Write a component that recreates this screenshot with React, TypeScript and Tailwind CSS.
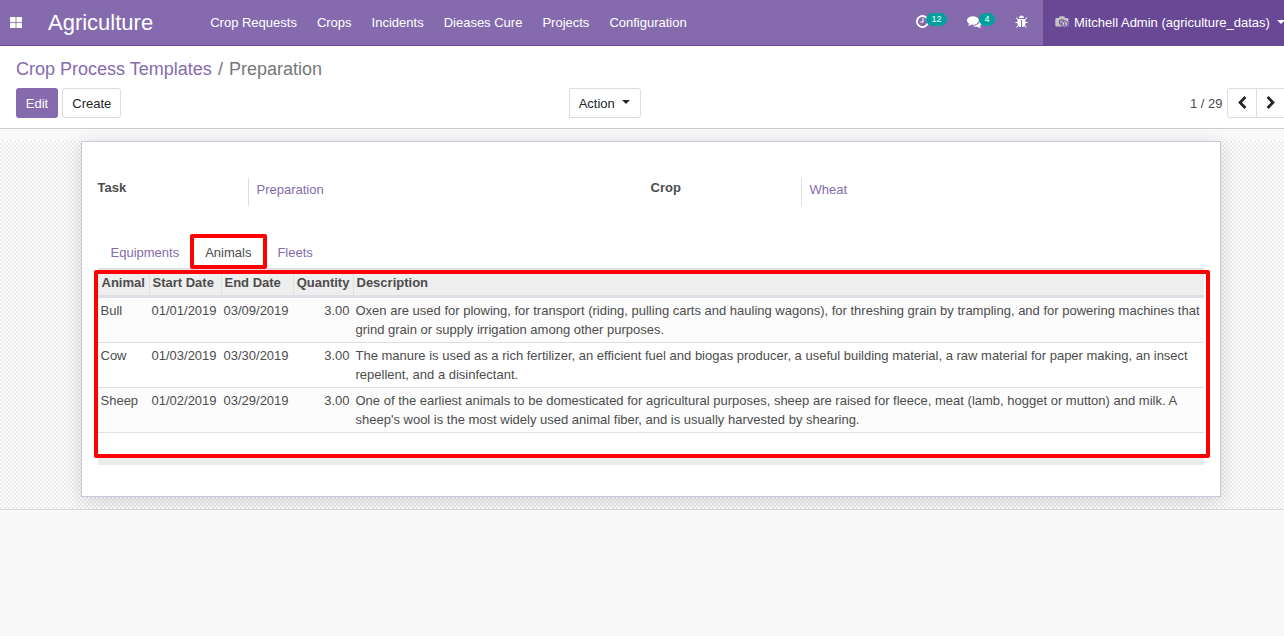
import React from "react";

const menu = ["Crop Requests", "Crops", "Incidents", "Dieases Cure", "Projects", "Configuration"];

const rows = [
  {
    animal: "Bull",
    start: "01/01/2019",
    end: "03/09/2019",
    qty: "3.00",
    text: "Oxen are used for plowing, for transport (riding, pulling carts and hauling wagons), for threshing grain by trampling, and for powering machines that grind grain or supply irrigation among other purposes.",
  },
  {
    animal: "Cow",
    start: "01/03/2019",
    end: "03/30/2019",
    qty: "3.00",
    text: "The manure is used as a rich fertilizer, an efficient fuel and biogas producer, a useful building material, a raw material for paper making, an insect repellent, and a disinfectant.",
  },
  {
    animal: "Sheep",
    start: "01/02/2019",
    end: "03/29/2019",
    qty: "3.00",
    text: "One of the earliest animals to be domesticated for agricultural purposes, sheep are raised for fleece, meat (lamb, hogget or mutton) and milk. A sheep's wool is the most widely used animal fiber, and is usually harvested by shearing.",
  },
];

const CLOCK =
  "M1024 544v448q0 14-9 23t-23 9h-320q-14 0-23-9t-9-23v-64q0-14 9-23t23-9h224v-352q0-14 9-23t23-9h64q14 0 23 9t9 23zm416 352q0-148-73-273t-198-198-273-73-273 73-198 198-73 273 73 273 198 198 273 73 273-73 198-198 73-273zm224 0q0 209-103 385.500t-279.500 279.500-385.500 103-385.500-103-279.500-279.500-103-385.500 103-385.500 279.500-279.500 385.500-103 385.500 103 279.500 279.500 103 385.500z";
const COMMENTS =
  "M1408 768q0 139-94 257t-256.500 186.500-353.500 68.500q-86 0-176-16-124 88-278 128-36 9-86 16h-3q-11 0-20.500-8t-11.500-21q-1-3-1-6.500t.5-6.500 2-6l2.500-5t3.500-5.500 4-5 4.500-5 4-4.500q5-6 23-25t26-29.500 22.500-29 25-38.500 20.500-44q-124-72-195-177t-71-224q0-139 94-257t256.500-186.500 353.500-68.500 353.500 68.500 256.500 186.500 94 257zm384 256q0 120-71 224.500t-195 176.500q10 24 20.500 44t25 38.500 22.500 29 26 29.500 23 25q1 1 4 4.500t4.500 5 4 5 3.500 5.500l2.500 5t2 6 .5 6.500-1 6.500q-3 14-13 22t-22 7q-50-7-86-16-154-40-278-128-90 16-176 16-271 0-472-132 58 4 88 4 161 0 309-45t264-129q125-92 192-212t67-254q0-77-23-152 129 71 204 178t75 230z";
const BUG =
  "M1632 960q0 26-19 45t-45 19h-224q0 171-67 290l208 209q19 19 19 45t-19 45q-18 19-45 19t-45-19l-198-197q-5 5-15 13t-42 28.500-65 36.500-82 29-97 13v-896h-128v896q-51 0-101.500-13.500t-87-33-66-39-43.500-32.500l-15-14-183 207q-20 21-48 21-24 0-43-16-19-18-20.500-44.500t15.500-46.500l202-227q-58-114-58-274h-224q-26 0-45-19t-19-45 19-45 45-19h224v-294l-173-173q-19-19-19-45t19-45 45-19 45 19l173 173h844l173-173q19-19 45-19t45 19 19 45-19 45l-173 173v294h224q26 0 45 19t19 45zm-480-576h-640q0-133 93.500-226.500t226.500-93.500 226.500 93.500 93.500 226.500z";
const LEFT =
  "M1427 301l-531 531 531 531q19 19 19 45t-19 45l-166 166q-19 19-45 19t-45-19l-742-742q-19-19-19-45t19-45l742-742q19-19 45-19t45 19l166 166q19 19 19 45t-19 45z";
const RIGHT =
  "M1363 877l-742 742q-19 19-45 19t-45-19l-166-166q-19-19-19-45t19-45l531-531-531-531q-19-19-19-45t19-45l166-166q19-19 45-19t45 19l742 742q19 19 19 45t-19 45z";

function Icon({ d, className }: { d: string; className: string }) {
  return (
    <svg viewBox="0 0 1792 1792" fill="currentColor" className={className}>
      <path d={d} />
    </svg>
  );
}

function Avatar() {
  return (
    <svg viewBox="0 0 14 12" className="mb-px h-3 w-3.5 shrink-0">
      <path d="M1.500 2h2.300l.9-1.700h4.500l.9 1.700h2.200q1.200 0 1.200 1.200v6.100q0 1.200-1.200 1.200h-10.800q-1.200 0-1.200-1.200v-6.100q0-1.200 1.200-1.200z" fill="#c5c2c5" />
      <circle cx="6.800" cy="6" r="2.300" fill="none" stroke="#694896" strokeWidth="1.100" />
      <circle cx="9.700" cy="8" r="3.200" fill="#c5c2c5" stroke="#694896" strokeWidth="0.900" />
      <path d="M9.700 6v4M8.400 8.700l1.300 1.400 1.300-1.400" fill="none" stroke="#694896" strokeWidth="0.800" />
    </svg>
  );
}

function Badge({ className, children }: { className: string; children: React.ReactNode }) {
  return (
    <span className={"absolute top-[13px] h-[13px] rounded-full bg-[#00a09d] text-[9px] leading-[13px] " + className}>
      {children}
    </span>
  );
}

function Navbar() {
  return (
    <header className="flex h-[46px] shrink-0 border-b border-[#694896] bg-[#856bae] text-white">
      <div className="flex h-[45px] w-12 items-center pl-[10px]">
        <svg viewBox="0 0 12 11" fill="currentColor" className="mb-px h-[11px] w-[12px]">
          <rect x="0" y="0" width="5.600" height="5.200" rx="0.600" />
          <rect x="6.400" y="0" width="5.600" height="5.200" rx="0.600" />
          <rect x="0" y="5.900" width="5.600" height="5.100" rx="0.600" />
          <rect x="6.400" y="5.900" width="5.600" height="5.100" rx="0.600" />
        </svg>
      </div>
      <div className="w-[152.2px] text-[22px] leading-[45px]">Agriculture</div>
      <nav className="flex leading-[45px]">
        {menu.map((m) => (
          <a key={m} className="px-[10px]">{m}</a>
        ))}
      </nav>
      <div className="ml-auto flex h-[45px]">
        <div className="relative w-[52px] pt-[14px]">
          <Icon d={CLOCK} className="h-[15px] w-[15px]" />
          <Badge className="left-[11px] px-[5.5px]">12</Badge>
        </div>
        <div className="relative w-12 pt-[14px]">
          <Icon d={COMMENTS} className="h-[15px] w-[15px]" />
          <Badge className="left-[12px] px-[5.5px]">4</Badge>
        </div>
        <div className="w-[28px] pt-[15px]">
          <Icon d={BUG} className="h-[14px] w-[14px]" />
        </div>
        <div className="flex h-[46px] w-[241px] items-center overflow-hidden bg-[#694896] pb-px pl-[11.5px] whitespace-nowrap">
          <Avatar />
          <span className="ml-[5.5px]">Mitchell Admin (agriculture_datas)</span>
          <span className="mb-px ml-[7px] shrink-0 border-x-4 border-t-4 border-x-transparent border-t-white" />
        </div>
      </div>
    </header>
  );
}

function ControlPanel() {
  return (
    <section className="flex h-[83px] shrink-0 flex-col border-b border-[#cccccc] bg-white pl-4">
      <div className="flex h-[42px] items-center pt-1 text-lg text-[#777777]">
        <span className="text-[#856bae]">Crop Process Templates</span>
        <span className="pr-[6px] pl-[6.3px]">/</span>
        <span>Preparation</span>
      </div>
      <div className="flex h-[30px] text-[#212529]">
        <button className="w-[42px] rounded-[3px] bg-[#856bae] pt-px text-white">Edit</button>
        <button className="ml-1 w-[59px] rounded-[3px] border border-[#dcdce6] pt-px pl-[0.7px]">Create</button>
        <button className="ml-[448px] flex w-[72px] items-center rounded-r-[3px] border border-[#dcdce6] pt-px pl-[8.7px]">
          Action
          <span className="mb-1 ml-[7px] border-x-4 border-t-4 border-x-transparent border-t-[#212529]" />
        </button>
        <span className="ml-auto pr-[4.5px] leading-[31px] text-[#4c4c4c]">1 / 29</span>
        <button className="flex w-[30px] items-center justify-center rounded-l-[3px] border border-[#dcdce6]">
          <Icon d={LEFT} className="h-[14px] w-[14px]" />
        </button>
        <button className="flex w-[27px] items-center justify-center border-y border-[#dcdce6]">
          <Icon d={RIGHT} className="h-[14px] w-[14px]" />
        </button>
      </div>
    </section>
  );
}

function Field({ label, value }: { label: string; value: string }) {
  return (
    <div className="flex h-7 w-[553px]">
      <span className="w-[150.5px] font-bold leading-5">{label}</span>
      <span className="border-l border-[#dddddd] pl-[7.5px] leading-6 text-[#856bae]">{value}</span>
    </div>
  );
}

const GRID = "grid grid-cols-[51px_72px_72px_60px_851px]";

function AnimalTable() {
  return (
    <div className="border-t-2 border-[#dcdfe6]">
      <div className={GRID + " h-[28px] border-b-3 border-[#dcdfe6] bg-[#eeeeee] pt-1 font-bold leading-[18px]"}>
        <span className="pl-[3.5px]">Animal</span>
        <span className="-mt-1 border-l border-[#dfdfdf] pt-1 pl-[2.5px]">Start Date</span>
        <span className="-mt-1 border-l border-[#dfdfdf] pt-1 pl-[2.5px]">End Date</span>
        <span className="-mt-1 border-l border-[#dfdfdf] pt-1 pl-[2.7px]">Quantity</span>
        <span className="-mt-1 border-l border-[#dfdfdf] pt-1 pl-[2.5px]">Description</span>
      </div>
      {rows.map((r) => (
        <div key={r.animal} className={GRID + " h-[45px] border-b border-[#dcdfe6] pt-[3px] leading-[19px] odd:bg-white even:bg-[#fcfcfc]"}>
          <span className="pl-[2.5px]">{r.animal}</span>
          <span className="pl-[2.5px]">{r.start}</span>
          <span className="pl-[2.5px]">{r.end}</span>
          <span className="pr-[3.5px] text-right">{r.qty}</span>
          <span className="pr-[3px] pl-[2.5px]">{r.text}</span>
        </div>
      ))}
      <div className="h-6" />
      <div className="h-2 bg-[#ececec]" />
    </div>
  );
}

export default function App() {
  return (
    <div className="flex h-[636px] w-[1284px] flex-col overflow-hidden bg-[#f9f9f9] font-['Liberation_Sans',Arial,sans-serif] text-[13px] leading-[19.5px] text-[#4c4c4c]">
      <Navbar />
      <ControlPanel />
      <main className="mt-3 h-[369px] border-b border-[#dddddd] bg-[conic-gradient(#ebebeb_25%,#ffffff_0_50%,#ebebeb_0_75%,#ffffff_0)] bg-size-[4px_4px] pl-[81px] [clip-path:inset(-12px_0_0_0)]">
        <div className="relative h-[356px] w-[1140px] border border-[#c8c8d8] bg-white px-4 shadow-[0_4px_18px_rgba(0,0,0,0.15)]">
          <div className="-ml-[0.5px] flex pt-9">
            <Field label="Task" value="Preparation" />
            <Field label="Crop" value="Wheat" />
          </div>
          <div className="flex h-[62px] gap-[26px] pt-[37px] pl-[12.5px] text-[#856bae]">
            <span>Equipments</span>
            <span className="text-[#4c4c4c]">Animals</span>
            <span>Fleets</span>
          </div>
          <AnimalTable />
          <div className="absolute top-[92px] left-[108px] h-[35px] w-[77px] rounded-[2px] border-4 border-[#ff0000]" />
          <div className="absolute top-[128px] left-[12px] h-[188px] w-[1116px] rounded-[2px] border-4 border-[#ff0000]" />
        </div>
      </main>
    </div>
  );
}
